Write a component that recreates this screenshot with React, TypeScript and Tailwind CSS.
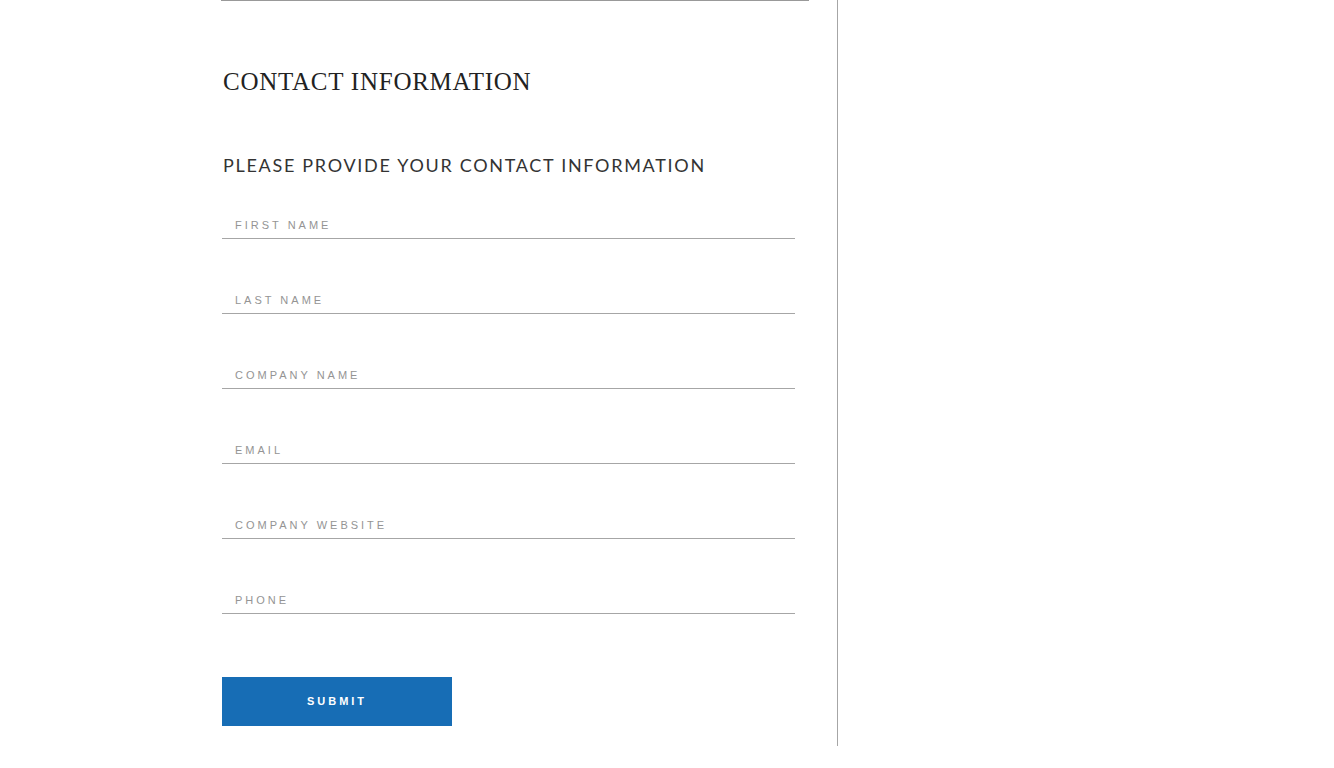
const fields = [
  "First Name",
  "Last Name",
  "Company Name",
  "Email",
  "Company Website",
  "Phone",
];

function Field({ label }: { label: string }) {
  return (
    <div className="border-b border-[#a6a6a6] h-[38px] flex items-end pb-[6px] pl-[13px]">
      <input
        placeholder={label.toUpperCase()}
        className="w-full bg-transparent outline-none text-[11px] leading-[14px] tracking-[3px] text-[#555] placeholder:text-[#949494] font-['Liberation_Sans',sans-serif]"
      />
    </div>
  );
}

export default function App() {
  return (
    <div className="bg-white min-h-[768px] w-full">
      <div className="ml-[221px] w-[617px] h-[746px] border-r border-[#a6a6a6]">
        <div className="w-[588px] border-t border-[#999]" />
        <div className="pl-[1px] w-[574px]">
          <h1 className="mt-[66px] text-[25px] leading-[30px] tracking-[0.75px] text-[#222] font-['Liberation_Serif',serif] pl-[1px]">
            CONTACT INFORMATION
          </h1>
          <h2 className="mt-[56px] text-[18px] leading-[24px] tracking-[1.7px] text-[#333] font-['Lato',sans-serif] pl-[1px]">
            PLEASE PROVIDE YOUR CONTACT INFORMATION
          </h2>
          <form className="mt-[24px] flex flex-col gap-[37px]">
            {fields.map((f) => (
              <Field key={f} label={f} />
            ))}
            <button
              type="button"
              className="mt-[26px] w-[230px] h-[49px] bg-[#176db5] text-white text-[11px] font-bold tracking-[3px] font-['Liberation_Sans',sans-serif]"
            >
              SUBMIT
            </button>
          </form>
        </div>
      </div>
    </div>
  );
}
